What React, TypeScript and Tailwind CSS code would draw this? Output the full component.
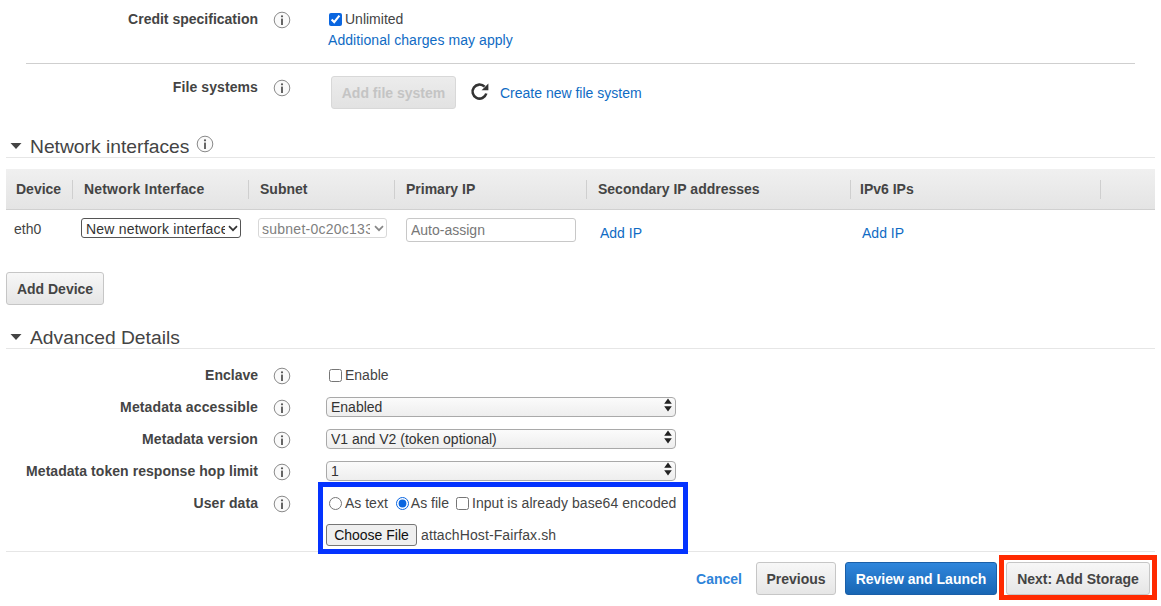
import React from "react";

const Info = ({ className = "" }: { className?: string }) => (
  <svg width="18" height="18" viewBox="0 0 18 18" className={className}>
    <circle cx="9" cy="9" r="7.8" fill="#fafafa" stroke="#8a8a8a" strokeWidth="1" />
    <circle cx="9" cy="5.3" r="1.1" fill="#555" />
    <rect x="8.1" y="7.6" width="1.8" height="6.4" fill="#555" />
  </svg>
);

const Caret = () => (
  <svg width="12" height="8" viewBox="0 0 12 8" className="shrink-0">
    <path d="M0.5 1 H11.5 L6 7 Z" fill="#444" />
  </svg>
);

const Link = ({ children, className = "" }: { children: React.ReactNode; className?: string }) => (
  <a className={`text-[#0f6bc4] ${className}`}>{children}</a>
);

const Label = ({ children, extra = "" }: { children: React.ReactNode; extra?: string }) => (
  <div className={`w-[258px] shrink-0 text-right font-bold text-[#444] whitespace-nowrap ${extra}`}>{children}</div>
);

const Heading = ({ children, info }: { children: React.ReactNode; info?: boolean }) => (
  <div className="mx-[6px] flex h-[24px] items-center gap-[8px] border-b border-[#e6e6e6] pl-[4px] text-[19.25px] text-[#444]">
    <Caret />
    <span className="pt-[2px] leading-none">{children}</span>
    {info && <Info className="-mt-[4px] -ml-[1px]" />}
  </div>
);

const UpDown = () => (
  <svg width="10" height="14" viewBox="0 0 10 14" className="pointer-events-none absolute right-[3px] top-[1px]">
    <path d="M5 0.5 L8.8 5.8 H1.2 Z M5 13.5 L8.8 8.2 H1.2 Z" fill="#222" />
  </svg>
);

const Chevron = ({ color }: { color: string }) => (
  <svg width="10" height="7" viewBox="0 0 10 7" className="pointer-events-none absolute right-[3px] top-[7px]">
    <path d="M1 1.2 L5 5.2 L9 1.2" fill="none" stroke={color} strokeWidth="1.7" />
  </svg>
);

const MetaSelect = ({ value }: { value: string }) => (
  <div className="relative ml-[35px] h-[20px] w-[350px]">
    <select
      defaultValue={value}
      className="h-full w-full appearance-none rounded-[4px] border border-[#a9a9a9] bg-gradient-to-b from-[#fbfbfb] to-[#eeeeee] pl-[4px] text-[14px] leading-[18px] text-[#333]"
    >
      <option>{value}</option>
    </select>
    <UpDown />
  </div>
);

const Row = ({ label, extra, children }: { label: string; extra?: string; children: React.ReactNode }) => (
  <div className="flex h-[32px]">
    <Label extra={extra}>{label}</Label>
    <Info className="ml-[15px] mt-[2px] shrink-0" />
    {children}
  </div>
);

const HeadCell = ({ w, children }: { w: string; children?: React.ReactNode }) => (
  <div className={`flex h-[19px] shrink-0 items-center font-bold text-[#444] ${w} border-r border-[#cfcfcf]`}>
    {children}
  </div>
);

const GrayButton = ({ children, className = "" }: { children: React.ReactNode; className?: string }) => (
  <button className={`h-[33px] rounded-[3px] border border-[#c6c6c6] bg-gradient-to-b from-[#f7f7f7] to-[#e6e6e6] font-bold text-[#444] ${className}`}>
    {children}
  </button>
);

export default function App() {
  return (
    <div className="h-[606px] w-[1161px] overflow-hidden bg-white font-['Liberation_Sans',Arial,sans-serif] text-[14px] leading-[20px] text-[#444]">
      <div className="mx-[26px] flex h-[64px] border-b border-[#cfcfcf] pt-[9px]">
        <div className="-ml-[26px] flex">
          <Label>Credit specification</Label>
          <Info className="ml-[15px] mt-[2px] shrink-0" />
          <div className="ml-[38px] flex flex-col">
            <label className="flex h-[20px] items-center">
              <input type="checkbox" defaultChecked className="mr-[3px] h-[13px] w-[13px] accent-[#0a66e0]" />
              Unlimited
            </label>
            <Link className="-ml-[1px] mt-[1px] tracking-[0.07px]">Additional charges may apply</Link>
          </div>
        </div>
      </div>

      <div className="flex h-[70px] pt-[12px]">
        <Label extra="pt-[1px] tracking-[0.1px]">File systems</Label>
        <Info className="ml-[15px] mt-[3px] shrink-0" />
        <button className="ml-[40px] h-[33px] w-[125px] rounded-[3px] border border-[#d8d8d8] bg-gradient-to-b from-[#ececec] to-[#e2e2e2] font-bold text-[#c4c4c4]">
          Add file system
        </button>
        <svg width="20" height="20" viewBox="0 0 20 20" className="ml-[14px] mt-[6px]">
          <path d="M16.3 11.5 A7 7 0 1 1 14.6 4.7" fill="none" stroke="#333" strokeWidth="2.6" />
          <path d="M11.6 8.2 L18.4 8.2 L18.4 1.4 Z" fill="#333" />
        </svg>
        <Link className="ml-[10px] mt-[7px]">Create new file system</Link>
      </div>

      <Heading info>Network interfaces</Heading>

      <div className="mx-[6px] mt-[11px] flex h-[41px] items-center border-b border-[#d0d0d0] bg-gradient-to-b from-[#f0f0f0] to-[#e4e4e4]">
        <HeadCell w="w-[67px] pl-[10px]">Device</HeadCell>
        <HeadCell w="w-[176px] pl-[11px]"><span className="tracking-[0.18px]">Network Interface</span></HeadCell>
        <HeadCell w="w-[146px] pl-[11px]">Subnet</HeadCell>
        <HeadCell w="w-[192px] pl-[11px]">Primary IP</HeadCell>
        <HeadCell w="w-[264px] pl-[11px]">Secondary IP addresses</HeadCell>
        <HeadCell w="w-[250px] pl-[9px]">IPv6 IPs</HeadCell>
      </div>

      <div className="mx-[6px] flex h-[62px] pt-[8px]">
        <div className="w-[75px] shrink-0 pl-[8px] pt-[1px]">eth0</div>
        <div className="relative h-[20px] w-[160px] shrink-0">
          <select className="h-full w-full appearance-none overflow-hidden rounded-[3px] border border-[#555] bg-white pb-[2px] pl-[4px] pr-[15px] text-[14px] tracking-[0.2px] text-[#333]">
            <option>New network interface</option>
          </select>
          <Chevron color="#333" />
        </div>
        <div className="relative ml-[17px] h-[20px] w-[129px] shrink-0">
          <select disabled className="h-full w-full appearance-none overflow-hidden rounded-[3px] border border-[#d8d8d8] bg-white pb-[2px] pl-[3px] pr-[16px] text-[14px] tracking-[0.25px] text-[#808080] opacity-100">
            <option>subnet-0c20c133</option>
          </select>
          <Chevron color="#888" />
        </div>
        <input
          placeholder="Auto-assign"
          className="ml-[19px] h-[24px] w-[170px] shrink-0 rounded-[3px] border border-[#c8c8c8] pl-[4px] text-[14px] placeholder:text-[#777]"
        />
        <Link className="ml-[24px] mt-[5px] shrink-0">Add IP</Link>
        <Link className="ml-[220px] mt-[5px] shrink-0">Add IP</Link>
      </div>

      <GrayButton className="ml-[6px] block w-[98px]">Add Device</GrayButton>

      <div className="mt-[20px]">
        <Heading>Advanced Details</Heading>
      </div>

      <div className="mt-[16px]">
        <Row label="Enclave">
          <label className="ml-[38px] flex h-[20px] items-center">
            <input type="checkbox" className="mr-[3px] h-[13px] w-[13px]" />
            Enable
          </label>
        </Row>
        <Row label="Metadata accessible" extra="tracking-[0.13px]">
          <MetaSelect value="Enabled" />
        </Row>
        <Row label="Metadata version" extra="tracking-[0.1px]">
          <MetaSelect value="V1 and V2 (token optional)" />
        </Row>
        <Row label="Metadata token response hop limit" extra="tracking-[0.05px]">
          <MetaSelect value="1" />
        </Row>
        <div className="flex">
          <Label extra="tracking-[0.07px]">User data</Label>
          <Info className="ml-[15px] mt-[2px] shrink-0" />
          <div className="relative z-10 -mt-[11px] ml-[27px] h-[72px] w-[370px] border-[5px] border-[#0433ff] bg-white pl-[6px] pt-[6px]">
            <div className="flex h-[20px] items-center whitespace-nowrap">
              <input type="radio" name="ud" className="mr-[3px] h-[13px] w-[13px]" />
              <span>As text</span>
              <input type="radio" name="ud" defaultChecked className="ml-[8px] mr-[2px] h-[13px] w-[13px] accent-[#0a66e0]" />
              <span>As file</span>
              <input type="checkbox" className="ml-[7px] mr-[3px] h-[13px] w-[13px]" />
              <span className="tracking-[0.07px]">Input is already base64 encoded</span>
            </div>
            <div className="-ml-[3px] mt-[11px] flex h-[22px] items-center">
              <button className="h-[22px] w-[91px] rounded-[3px] border border-[#767676] bg-[#efefef] text-[14px] leading-none text-[#111]">
                Choose File
              </button>
              <span className="ml-[4px] tracking-[0.1px]">attachHost-Fairfax.sh</span>
            </div>
          </div>
        </div>
      </div>

      <div className="mx-[6px] -mt-[3px] flex h-[55px] items-start justify-end border-t border-[#e6e6e6]">
        <a className="mt-[17px] font-bold text-[#2e84d9]">Cancel</a>
        <GrayButton className="ml-[14px] mt-[10px] w-[80px]">Previous</GrayButton>
        <button className="ml-[9px] mt-[10px] h-[33px] w-[152px] rounded-[3px] border border-[#1a5fa8] bg-gradient-to-b from-[#2f86dc] to-[#1866b4] font-bold text-white">
          Review and Launch
        </button>
        <div className="-mr-[2px] ml-[2px] mt-[3px] border-[5px] border-[#ff2a00] px-[2px] pt-[2px]">
          <GrayButton className="block w-[144px]">Next: Add Storage</GrayButton>
        </div>
      </div>
    </div>
  );
}
